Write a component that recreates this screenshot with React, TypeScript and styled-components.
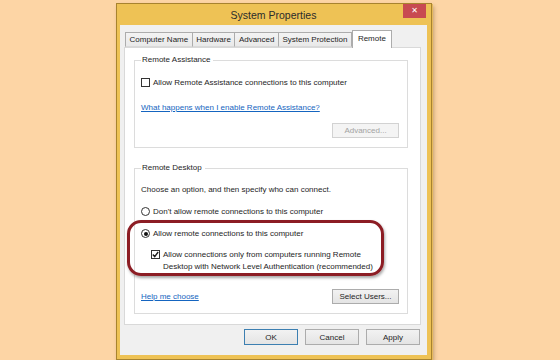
import styled, { createGlobalStyle } from "styled-components";

const GlobalStyle = createGlobalStyle`
  html, body {
    margin: 0;
    padding: 0;
    background: #fdd5a5;
  }
  body {
    font-family: "Liberation Sans", Arial, sans-serif;
    color: #1e1e1e;
  }
`;

const Desktop = styled.main`
  width: 560px;
  height: 360px;
  box-sizing: border-box;
  padding: 3px 0 0 116px;
  background: #fdd5a5;
  overflow: hidden;
`;

const Window = styled.section`
  width: 316px;
  box-sizing: border-box;
  display: flex;
  flex-direction: column;
  background: #eec255;
  border: 1px solid #a8832f;
  padding: 0 4px 4px 3px;
  box-shadow: 1px 1px 0 #e5b95c, 2px 3px 4px rgba(90, 60, 20, 0.35);
`;

const TitleBar = styled.header`
  height: 21px;
  display: grid;
  grid-template-columns: 1fr auto 1fr;
  align-items: center;
`;

const Title = styled.h1`
  grid-column: 2;
  margin: 0;
  font-size: 10.5px;
  font-weight: normal;
  color: #2b2b2b;
`;

const CloseButton = styled.button`
  grid-column: 3;
  justify-self: end;
  align-self: start;
  width: 23px;
  height: 14px;
  margin-right: 1px;
  padding: 0;
  border: none;
  background: #c84a51;
  color: #fff;
  font-family: "DejaVu Sans", sans-serif;
  font-size: 8px;
  font-weight: bold;
  line-height: 14px;
`;

const Client = styled.div`
  background: #f0f0f0;
  padding: 5px 6px 10px 4px;
  display: flex;
  flex-direction: column;
  font-size: 8px;
`;

const TabBar = styled.div`
  height: 17px;
  display: flex;
  align-items: flex-end;
  padding-left: 1px;
`;

const Tab = styled.div<{ $active?: boolean }>`
  box-sizing: border-box;
  height: ${({ $active }) => ($active ? "18px" : "15px")};
  margin-bottom: ${({ $active }) => ($active ? "-1px" : "0")};
  margin-left: ${({ $active }) => ($active ? "0" : "-1px")};
  padding: ${({ $active }) => ($active ? "0 5px 2px" : "0 3.5px")};
  position: relative;
  z-index: ${({ $active }) => ($active ? 1 : 0)};
  display: flex;
  align-items: center;
  border: 1px solid #acacac;
  border-bottom: ${({ $active }) => ($active ? "none" : "1px solid #d9d9d9")};
  background: ${({ $active }) =>
    $active ? "#ffffff" : "linear-gradient(#f3f3f3, #e9e9e9)"};
  white-space: nowrap;
  &:first-child {
    margin-left: 0;
  }
`;

const Panel = styled.div`
  background: #ffffff;
  border: 1px solid #d9d9d9;
  padding: 7px 12px 10px 9px;
  display: flex;
  flex-direction: column;
  gap: 15px;
`;

const Group = styled.fieldset`
  margin: 0;
  padding: 0 8px 9px 6px;
  border: 1px solid #dcdcdc;
  display: flex;
  flex-direction: column;
  align-items: flex-start;
`;

const Legend = styled.legend`
  margin-left: 0;
  padding: 0 3px 0 1px;
  line-height: 10px;
`;

const Row = styled.label<{ $gap?: number; $indent?: number }>`
  display: flex;
  align-items: flex-start;
  gap: 3px;
  line-height: 12px;
  margin-top: ${({ $gap }) => $gap ?? 0}px;
  margin-left: ${({ $indent }) => $indent ?? 0}px;
  white-space: nowrap;
`;

const Box = styled.span`
  width: 9px;
  height: 9px;
  margin-top: 1px;
  box-sizing: border-box;
  border: 1px solid #333;
  background: #fff;
  flex: none;
  display: flex;
  align-items: center;
  justify-content: center;
`;

const Radio = styled.span<{ $checked?: boolean }>`
  width: 9px;
  height: 9px;
  margin-top: 1px;
  box-sizing: border-box;
  border: 1px solid #333;
  border-radius: 50%;
  background: #fff;
  flex: none;
  display: flex;
  align-items: center;
  justify-content: center;
  &::after {
    content: "";
    width: 4px;
    height: 4px;
    border-radius: 50%;
    background: ${({ $checked }) => ($checked ? "#111" : "transparent")};
  }
`;

const Text = styled.p<{ $gap?: number }>`
  margin: ${({ $gap }) => $gap ?? 0}px 0 0;
  line-height: 12px;
`;

const Link = styled.a<{ $gap?: number }>`
  margin-top: ${({ $gap }) => $gap ?? 0}px;
  color: #1565c0;
  text-decoration: underline;
  line-height: 12px;
  cursor: pointer;
`;

const Button = styled.button<{ $wide?: boolean; $default?: boolean }>`
  box-sizing: border-box;
  width: ${({ $wide }) => ($wide ? "67px" : "54px")};
  height: 15px;
  padding: 0;
  font-family: inherit;
  font-size: 8px;
  color: #1e1e1e;
  border: 1px solid ${({ $default }) => ($default ? "#3c7fb1" : "#acacac")};
  background: linear-gradient(#f2f2f2, #e4e4e4);
  &:disabled {
    color: #a3a3a3;
    border-color: #d2d2d2;
    background: #f4f4f4;
  }
`;

const DialogButton = styled(Button)`
  height: 16px;
`;

const RightAligned = styled.div<{ $gap?: number }>`
  align-self: stretch;
  display: flex;
  justify-content: flex-end;
  margin-top: ${({ $gap }) => $gap ?? 0}px;
`;

const SplitRow = styled.div`
  align-self: stretch;
  display: flex;
  justify-content: space-between;
  align-items: center;
  margin-top: 16px;
`;

const Highlight = styled.div`
  align-self: stretch;
  position: relative;
  margin-top: 10px;
  &::before {
    content: "";
    position: absolute;
    top: -8px;
    left: -14px;
    right: 15px;
    bottom: -3px;
    border: 3px solid #8c1d24;
    border-radius: 14px;
    box-shadow: 1px 2px 3px rgba(0, 0, 0, 0.35);
    pointer-events: none;
  }
`;

const ButtonRow = styled.footer`
  display: flex;
  justify-content: flex-end;
  gap: 7px;
  margin-top: 4px;
  padding-right: 1px;
`;

const Check = () => (
  <svg width="7" height="7" viewBox="0 0 7 7">
    <polyline
      points="0.8,3.6 2.7,5.6 6.2,1"
      fill="none"
      stroke="#1e1e1e"
      strokeWidth="1.4"
    />
  </svg>
);

const tabs = ["Computer Name", "Hardware", "Advanced", "System Protection", "Remote"];

const App = () => {
  return (
    <Desktop>
      <GlobalStyle />
      <Window>
        <TitleBar>
          <Title>System Properties</Title>
          <CloseButton>✕</CloseButton>
        </TitleBar>
        <Client>
          <TabBar>
            {tabs.map((t) => (
              <Tab key={t} $active={t === "Remote"}>
                {t}
              </Tab>
            ))}
          </TabBar>
          <Panel>
            <Group>
              <Legend>Remote Assistance</Legend>
              <Row $gap={12}>
                <Box />
                Allow Remote Assistance connections to this computer
              </Row>
              <Link $gap={13}>What happens when I enable Remote Assistance?</Link>
              <RightAligned $gap={9}>
                <Button $wide disabled>
                  Advanced...
                </Button>
              </RightAligned>
            </Group>
            <Group>
              <Legend>Remote Desktop</Legend>
              <Text $gap={11}>Choose an option, and then specify who can connect.</Text>
              <Row $gap={10}>
                <Radio />
                Don't allow remote connections to this computer
              </Row>
              <Highlight>
                <Row>
                  <Radio $checked />
                  Allow remote connections to this computer
                </Row>
                <Row $gap={9} $indent={10}>
                  <Box>
                    <Check />
                  </Box>
                  <span>
                    Allow connections only from computers running Remote
                    <br />
                    Desktop with Network Level Authentication (recommended)
                  </span>
                </Row>
              </Highlight>
              <SplitRow>
                <Link>Help me choose</Link>
                <Button $wide>Select Users...</Button>
              </SplitRow>
            </Group>
          </Panel>
          <ButtonRow>
            <DialogButton $default>OK</DialogButton>
            <DialogButton>Cancel</DialogButton>
            <DialogButton>Apply</DialogButton>
          </ButtonRow>
        </Client>
      </Window>
    </Desktop>
  );
};

export default App;
